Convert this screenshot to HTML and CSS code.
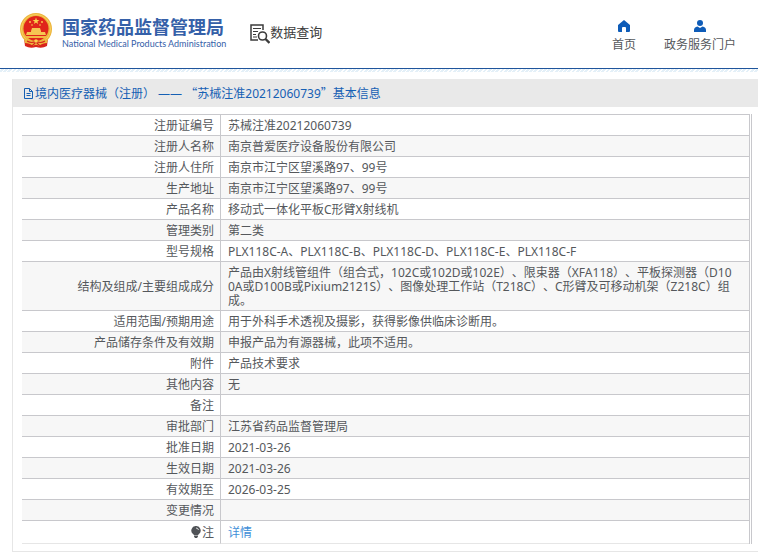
FILE: index.html
```html
<!DOCTYPE html>
<html lang="zh-CN">
<head>
<meta charset="utf-8">
<title>数据查询</title>
<link rel="stylesheet" href="styles.css">
</head>
<body>
<header class="top">
  <div class="brand">
    <svg class="emblem" viewBox="0 0 32 36" aria-hidden="true">
      <path d="M4 25 L28 25 L27 33 Q22 36 16 34 Q10 36 5 33 Z" fill="#d8231c"/>
      <circle cx="16" cy="16" r="16" fill="#edb53c"/>
      <circle cx="16" cy="16" r="14.5" fill="none" stroke="#f7cf62" stroke-width="1"/>
      <circle cx="16" cy="15.500" r="12.500" fill="#e0251b"/>
      <path d="M16 4.500l.9 2.400h2.500l-2 1.500.7 2.500-2.100-1.500-2.100 1.500.7-2.500-2-1.500h2.500z" fill="#f9d24e"/>
      <g fill="#f9d24e"><circle cx="10" cy="9" r=".9"/><circle cx="22" cy="9" r=".9"/><circle cx="12" cy="12" r=".8"/><circle cx="20" cy="12" r=".8"/></g>
      <path d="M11 18l1-3h8l1 3v1h4l1 3H6l1-3h4z" fill="#f6c552"/>
      <path d="M5 23h22l-1 2H6z" fill="#f3b744"/>
      <path d="M4 25q6 5 12 2q6 3 12-2l-1 5q-5 0-8 3l-3-2-3 2q-3-3-8-3z" fill="#edb53c"/>
      <path d="M7 28q5 3 9 0q4 3 9 0M12 33l4-4 4 4" fill="none" stroke="#d8231c" stroke-width="1.200"/>
      <circle cx="16" cy="28" r="1.800" fill="#f9d24e"/>
    </svg>
    <div>
      <div class="name">国家药品监督管理局</div>
      <div class="name-en">National Medical Products Administration</div>
    </div>
  </div>
  <div class="query">
    <svg class="query-icon" viewBox="0 0 20 20" fill="none" stroke="#3c3c3c" aria-hidden="true">
      <path d="M13 6V1H1v15h7" stroke-width="1.500"/>
      <path d="M3 4.500h8M3 7.500h5M3 10.500h3M3 13h4" stroke-width="1.200"/>
      <circle cx="12.500" cy="12" r="4" stroke-width="1.600"/>
      <path d="M15.500 15l4 4" stroke-width="2.400"/>
    </svg>
    <span>数据查询</span>
  </div>
  <nav class="links">
    <a href="#">
      <svg viewBox="0 0 12 12" aria-hidden="true"><path d="M6 0L0 5v6q0 1 1 1h3V8q0-1 1-1h2q1 0 1 1v4h3q1 0 1-1V5z" fill="#0e5cb8"/></svg>
      首页
    </a>
    <a href="#">
      <svg viewBox="0 0 12 12" aria-hidden="true"><circle cx="6" cy="3" r="3" fill="#0e5cb8"/><path d="M0 12V10q0-3 3.500-3.500L6 8l2.500-1.500Q12 7 12 10v2z" fill="#0e5cb8"/></svg>
      政务服务门户
    </a>
  </nav>
</header>
<div class="hatch"></div>
<main class="panel">
  <h1 class="title">
    <svg viewBox="0 0 11 11" fill="none" stroke="#1660b4" aria-hidden="true"><path d="M1.500.5h5l3 3v7h-8zM6.500.5v3h3M3.500 5.500h4M3.500 7.500h4"/></svg>
    <span>境内医疗器械（注册） —— <span class="wide">“</span>苏械注准20212060739<span class="wide">”</span>基本信息</span>
  </h1>
  <div class="sheet">
    <table>
      <tr><th scope="row">注册证编号</th><td>苏械注准20212060739</td></tr>
      <tr><th scope="row">注册人名称</th><td>南京普爱医疗设备股份有限公司</td></tr>
      <tr><th scope="row">注册人住所</th><td>南京市江宁区望溪路97、99号</td></tr>
      <tr><th scope="row">生产地址</th><td>南京市江宁区望溪路97、99号</td></tr>
      <tr><th scope="row">产品名称</th><td>移动式一体化平板C形臂X射线机</td></tr>
      <tr><th scope="row">管理类别</th><td>第二类</td></tr>
      <tr><th scope="row">型号规格</th><td>PLX118C-A、PLX118C-B、PLX118C-D、PLX118C-E、PLX118C-F</td></tr>
      <tr><th scope="row">结构及组成/主要组成成分</th><td>产品由X射线管组件（组合式，102C或102D或102E）、限束器（XFA118）、平板探测器（D100A或D100B或Pixium2121S）、图像处理工作站（T218C）、C形臂及可移动机架（Z218C）组成。</td></tr>
      <tr><th scope="row">适用范围/预期用途</th><td>用于外科手术透视及摄影，获得影像供临床诊断用。</td></tr>
      <tr><th scope="row">产品储存条件及有效期</th><td>申报产品为有源器械，此项不适用。</td></tr>
      <tr><th scope="row">附件</th><td>产品技术要求</td></tr>
      <tr><th scope="row">其他内容</th><td>无</td></tr>
      <tr><th scope="row">备注</th><td></td></tr>
      <tr><th scope="row">审批部门</th><td>江苏省药品监督管理局</td></tr>
      <tr><th scope="row">批准日期</th><td>2021-03-26</td></tr>
      <tr><th scope="row">生效日期</th><td>2021-03-26</td></tr>
      <tr><th scope="row">有效期至</th><td>2026-03-25</td></tr>
      <tr><th scope="row">变更情况</th><td></td></tr>
      <tr class="note"><th scope="row"><svg class="bulb" viewBox="0 0 10 12" aria-hidden="true"><path d="M5 0a4.500 4.500 0 0 1 3 8L7 9H3L2 8A4.500 4.500 0 0 1 5 0zM3 9.500h4v1L6 12H4l-1-1.500z" fill="#4f5256"/><path d="M5 2q2 0 2.500 2" fill="none" stroke="#fff" stroke-width=".8"/></svg>注</th><td><a href="#">详情</a></td></tr>
    </table>
  </div>
</main>
</body>
</html>
```
FILE: styles.css
```css
* { box-sizing: border-box; }

body {
  margin: 0;
  background: #fff;
  color: #55585c;
  font: 12px/14px "Noto Sans", "Noto Sans CJK SC", sans-serif;
  text-spacing-trim: space-all;
}

a { color: inherit; text-decoration: none; }
svg { display: block; flex: none; }

.top {
  display: flex;
  align-items: flex-start;
  height: 69px;
  padding: 0 22px 0 20px;
  border-bottom: 1px solid #1f559c;
}

.brand {
  display: flex;
  gap: 10px;
  padding-top: 13px;
}

.emblem { width: 32px; height: 36px; }

.name {
  padding-top: 3px;
  color: #3560a8;
  font-size: 18px;
  font-weight: 700;
  line-height: 22px;
}

.name-en {
  color: #3560a8;
  font-family: Lato, sans-serif;
  font-size: 9px;
  line-height: 12px;
}

.query {
  display: flex;
  margin-left: 24px;
  padding-top: 24px;
  color: #3c3c3c;
  font-size: 13px;
  line-height: 16px;
}

.query-icon { width: 20px; height: 20px; }

.links {
  display: flex;
  gap: 28px;
  margin-left: auto;
  padding-top: 20px;
  line-height: 26px;
}

.links a {
  display: flex;
  flex-direction: column;
  align-items: center;
}

.links svg { width: 12px; height: 12px; }

.hatch {
  height: 3px;
  background: repeating-linear-gradient(135deg, #fff 0 1px, #e4f0f8 1px 3px);
}

.panel {
  margin: 7px 0 6px 12px;
  border: 1px solid #e6e6e6;
  border-width: 0 0 1px 1px;
}

.title {
  display: flex;
  align-items: center;
  gap: 1px;
  height: 28px;
  margin: 0;
  padding: 0 10px;
  background: #e9e9e9;
  color: #1660b4;
  font-size: 12px;
  font-weight: 400;
  line-height: 28px;
}

.title svg { width: 11px; height: 11px; }

.wide { font-family: "Noto Sans CJK SC", sans-serif; }

.sheet {
  margin: 7px 6px 7px 9px;
  border-right: 1px solid #c8c8cc;
}

table {
  width: calc(100% - 1px);
  border-collapse: separate;
  border-spacing: 0;
  border: 1px solid #c8c8cc;
  border-width: 1px 1px 0 0;
}

th, td {
  height: 21px;
  padding: 4px 6px 2px;
  border-bottom: 1px solid #c8c8cc;
  font-weight: 400;
  word-break: break-all;
}

th {
  width: 199px;
  border-right: 1px solid #c8c8cc;
  text-align: right;
}

td {
  padding-right: 12px;
  padding-left: 7px;
  text-align: left;
}

tr:nth-child(even) { background: #f7f7f7; }

.note th, .note td {
  height: 23px;
  border-bottom-color: #e6e6e6;
}

.note a { color: #3f8fd8; }

.bulb {
  display: inline-block;
  width: 10px;
  height: 12px;
  margin-right: 1px;
  vertical-align: -1px;
}
```
